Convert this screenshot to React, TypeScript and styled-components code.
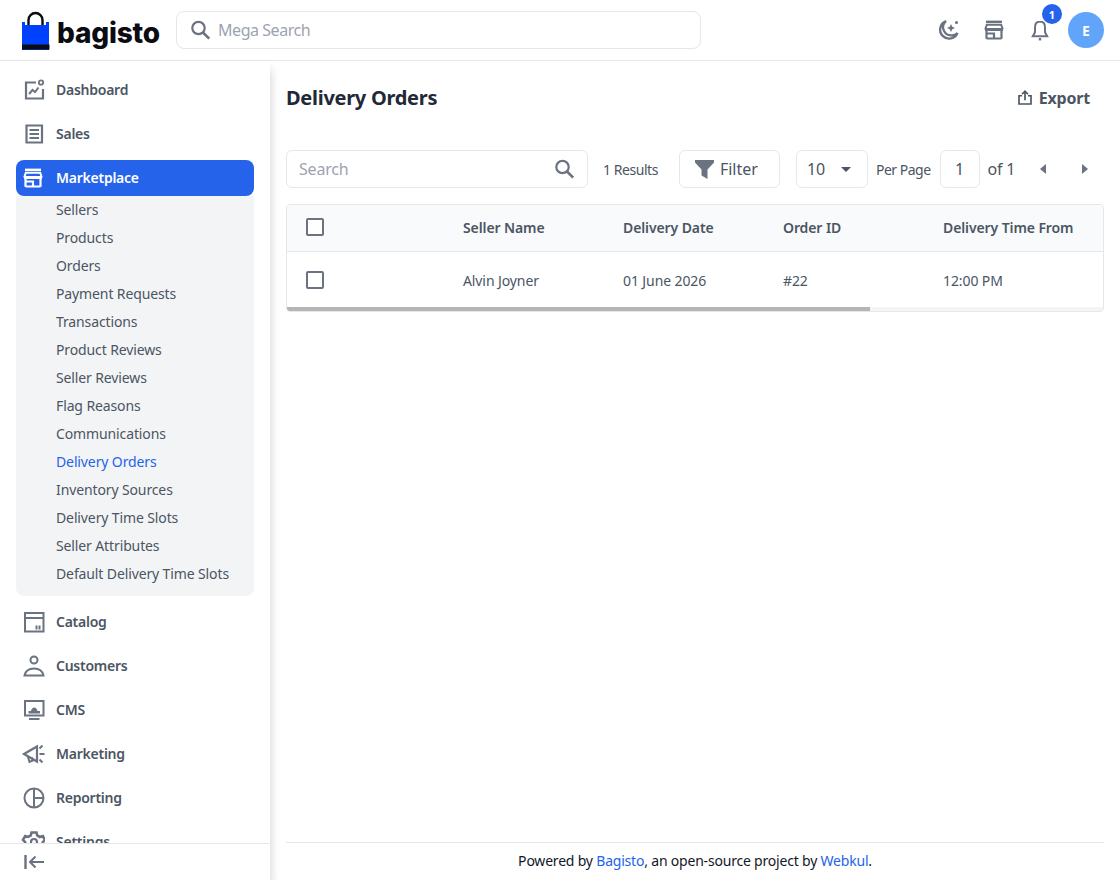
import React from 'react'
import styled, { createGlobalStyle } from 'styled-components'

const bodyFont = '"Noto Sans", "Open Sans", sans-serif'

const GlobalStyle = createGlobalStyle`
  html, body { margin: 0; padding: 0; background: #fff; height: 100%; overflow: hidden; }
  body { font-family: ${bodyFont}; color: #4b5563; }
  * { box-sizing: border-box; }
`

const Page = styled.div`
  width: 1120px;
  height: 880px;
  display: flex;
  flex-direction: column;
  overflow: hidden;
`

const Header = styled.header`
  height: 61px;
  flex: none;
  display: flex;
  align-items: center;
  justify-content: space-between;
  padding: 0 16px 0 21px;
  border-bottom: 1px solid #e5e7eb;
  background: #fff;
`

const HeaderLeft = styled.div`
  display: flex;
  align-items: center;
`

const Logo = styled.div`
  display: flex;
  align-items: flex-end;
  width: 155px;
  gap: 7px;
`

const LogoText = styled.span`
  font-family: Inter, sans-serif;
  font-size: 28px;
  line-height: 34px;
  font-weight: 800;
  letter-spacing: -0.2px;
  color: #0b0b12;
`

const MegaSearch = styled.div`
  width: 525px;
  height: 38px;
  display: flex;
  align-items: center;
  gap: 6px;
  padding: 0 11px;
  border: 1px solid #e5e7eb;
  border-radius: 8px;
  color: #9ca3af;
  font-size: 16px;
  letter-spacing: -0.45px;
  svg { color: #6b7280; }
`

const HeaderRight = styled.div`
  display: flex;
  align-items: center;
  gap: 22px;
  color: #6b7280;
`

const IconSlot = styled.div`
  position: relative;
  width: 24px;
  height: 24px;
  display: flex;
`

const Badge = styled.span`
  position: absolute;
  top: -14px;
  left: 14px;
  width: 20px;
  height: 20px;
  border-radius: 50%;
  background: #2563eb;
  color: #fff;
  font-size: 11px;
  font-weight: 700;
  display: flex;
  align-items: center;
  justify-content: center;
`

const Avatar = styled.div`
  width: 36px;
  height: 36px;
  margin-left: -6px;
  border-radius: 50%;
  background: #60a5fa;
  color: #fff;
  font-size: 14px;
  font-weight: 700;
  display: flex;
  align-items: center;
  justify-content: center;
`

const Body = styled.div`
  flex: 1;
  min-height: 0;
  display: flex;
`

const Sidebar = styled.aside`
  width: 270px;
  flex: none;
  display: flex;
  flex-direction: column;
  background: #fff;
  box-shadow: 0 8px 10px rgba(0, 0, 0, 0.2);
  position: relative;
  z-index: 1;
`

const Nav = styled.nav`
  flex: 1;
  min-height: 0;
  overflow: hidden;
  padding: 11px 16px 0;
`

const NavItem = styled.a<{ $active?: boolean }>`
  height: 36px;
  margin-bottom: 8px;
  display: flex;
  align-items: center;
  gap: 11px;
  padding: 0 5px;
  border-radius: 8px;
  font-size: 14px;
  font-weight: 600;
  letter-spacing: -0.25px;
  color: ${p => (p.$active ? '#fff' : '#4b5563')};
  background: ${p => (p.$active ? '#2563eb' : 'transparent')};
  svg { color: ${p => (p.$active ? '#fff' : '#6b7280')}; flex: none; }
`

const NavLabel = styled.span`
  padding-bottom: 2px;
`

const SubMenu = styled.div`
  margin: -8px 0 8px;
  padding: 0 0 8px 40px;
  background: #f3f4f6;
  border-radius: 0 0 8px 8px;
`

const SubItem = styled.a<{ $active?: boolean }>`
  display: flex;
  align-items: center;
  height: 28px;
  padding-bottom: 2px;
  font-size: 14px;
  letter-spacing: -0.12px;
  color: ${p => (p.$active ? '#2563eb' : '#4b5563')};
`

const Collapse = styled.div`
  height: 37px;
  flex: none;
  display: flex;
  align-items: center;
  padding-left: 22px;
  background: #fff;
  border-top: 1px solid #e5e7eb;
  color: #6b7280;
`

const Main = styled.main`
  flex: 1;
  min-width: 0;
  display: flex;
  flex-direction: column;
  padding: 0 16px;
`

const Content = styled.div`
  flex: 1;
  min-height: 0;
`

const TitleRow = styled.div`
  height: 74px;
  display: flex;
  justify-content: space-between;
  align-items: center;
`

const Title = styled.h1`
  margin: 0 0 2px;
  font-size: 20px;
  font-weight: 700;
  letter-spacing: -0.28px;
  color: #1f2937;
`

const ExportBtn = styled.button`
  display: flex;
  align-items: center;
  gap: 5px;
  padding: 0 14px 0 0;
  border: 0;
  background: none;
  font: 700 16px ${bodyFont};
  letter-spacing: -0.2px;
  color: #4b5563;
`

const Toolbar = styled.div`
  margin-top: 15px;
  height: 38px;
  display: flex;
  align-items: center;
`

const Field = styled.div`
  height: 38px;
  display: flex;
  align-items: center;
  border: 1px solid #e5e7eb;
  border-radius: 6px;
  background: #fff;
  font-size: 16px;
  color: #4b5563;
`

const SearchField = styled(Field)`
  width: 302px;
  justify-content: space-between;
  padding: 0 11px 0 12px;
  color: #9ca3af;
  letter-spacing: -0.2px;
  svg { color: #6b7280; }
`

const Results = styled.span`
  margin-left: 15px;
  font-size: 14px;
  letter-spacing: -0.45px;
`

const FilterBtn = styled(Field)`
  width: 101px;
  margin-left: 21px;
  padding-left: 15px;
  gap: 6px;
`

const PerPageSelect = styled(Field)`
  width: 72px;
  margin-left: 16px;
  padding: 0 16px 0 10px;
  justify-content: space-between;
`

const PerPageLabel = styled.span`
  margin-left: 8px;
  font-size: 14px;
  letter-spacing: -0.5px;
`

const PageBox = styled(Field)`
  width: 40px;
  margin-left: 9px;
  justify-content: center;
`

const OfLabel = styled.span`
  margin-left: 8px;
  font-size: 16px;
  letter-spacing: -0.2px;
`

const Pager = styled.div`
  margin-left: 25px;
  width: 48px;
  display: flex;
  justify-content: space-between;
  color: #6b7280;
`

const Table = styled.div`
  margin-top: 16px;
  border: 1px solid #e5e7eb;
  border-radius: 4px;
  overflow: hidden;
`

const Row = styled.div<{ $head?: boolean }>`
  display: grid;
  grid-template-columns: 176px 160px 160px 160px 1fr;
  align-items: center;
  height: ${p => (p.$head ? '47px' : '55px')};
  padding-bottom: ${p => (p.$head ? '2px' : '0')};
  font-size: 14px;
  font-weight: ${p => (p.$head ? 600 : 400)};
  letter-spacing: -0.1px;
  background: ${p => (p.$head ? '#f9fafb' : '#fff')};
  border-bottom: ${p => (p.$head ? '1px solid #e5e7eb' : '0')};
`

const BodyCell = styled.span`
  padding-top: 2px;
`

const CheckCell = styled.div`
  padding-left: 19px;
  display: flex;
`

const Check = styled.span`
  width: 18px;
  height: 18px;
  border: 2px solid #6b7280;
  border-radius: 2px;
  background: #fff;
`

const ScrollTrack = styled.div`
  height: 4px;
  background: #f3f4f6;
`

const ScrollThumb = styled.div`
  width: 583px;
  height: 4px;
  background: #b5b5b5;
`

const Footer = styled.footer`
  height: 38px;
  flex: none;
  display: flex;
  align-items: center;
  justify-content: center;
  padding-bottom: 2px;
  border-top: 1px solid #e5e7eb;
  font-size: 14px;
  letter-spacing: -0.2px;
  color: #111827;
`

const FooterLink = styled.a`
  color: #2563eb;
`

type IconProps = { size?: number }

const Svg = ({ size = 24, children }: IconProps & { children: React.ReactNode }) => (
  <svg width={size} height={size} viewBox="0 0 24 24" fill="none" stroke="currentColor" strokeWidth="2">
    {children}
  </svg>
)

const SearchIcon = ({ size = 24 }: IconProps) => (
  <Svg size={size}>
    <circle cx="10.5" cy="10" r="6.2" strokeWidth="2.2" />
    <path d="M15 14.5l6.200 6.200" strokeWidth="2.600" />
  </Svg>
)

const MoonIcon = () => (
  <Svg>
    <path d="M10 3.200a9 9 0 1 0 11.500 11.800c-1.400 1.500-3.400 2.300-5.600 2.300A8 8 0 0 1 10 3.200z" strokeWidth="2.300" />
    <path d="M15 6l1.300 2.700 2.700 1.300-2.700 1.300L15 14l-1.300-2.700L11 10l2.700-1.300z" fill="currentColor" stroke="none" />
    <circle cx="20.500" cy="4.500" r="1.500" fill="currentColor" stroke="none" />
  </Svg>
)

const StoreIcon = () => (
  <Svg>
    <path d="M4 3.800h16" strokeWidth="2.400" />
    <path d="M3.200 11.500L4.800 6.800h14.400l1.600 4.700" strokeWidth="2" />
    <path d="M3 11.500h18" strokeWidth="3" />
    <path d="M4.500 12v8.800M19.500 12v8.800M4.500 15.500h7.500v5H4.500M12 20.500h7.500" strokeWidth="2.200" />
  </Svg>
)

const BellIcon = () => (
  <Svg>
    <path d="M12 3.500c-3.300 0-5 2.500-5 5.700v5L4.800 18.300h14.400L17 14.200v-5c0-3.200-1.700-5.700-5-5.700z" strokeWidth="2" />
    <path d="M10.800 21.200h2.400" strokeWidth="2.400" />
  </Svg>
)

const ExportIcon = () => (
  <Svg size={18}>
    <path d="M8 9H4v11h16V9h-4" strokeWidth="2.200" />
    <path d="M12 15V3.500M8 7l4-4 4 4" strokeWidth="2.200" />
  </Svg>
)

const DashboardIcon = () => (
  <Svg>
    <path d="M15 4.500H5v16h17V11" strokeWidth="2.200" />
    <circle cx="20" cy="4.500" r="2.200" strokeWidth="1.800" />
    <path d="M8 16l3.500-4 2.500 2 3.500-4.500" strokeWidth="2" />
  </Svg>
)

const SalesIcon = () => (
  <Svg>
    <path d="M5.500 3.500h15.500v17H5.500z" strokeWidth="2.200" />
    <path d="M8.500 8h9.500M8.500 12h9.500M8.500 16h9.500" strokeWidth="2" />
  </Svg>
)

const CatalogIcon = () => (
  <Svg>
    <path d="M4 3h18.500v18.500H4zM4 8h18.500" strokeWidth="2" />
    <path d="M15.500 15.500v4M18.500 15.500v4" strokeWidth="2" />
  </Svg>
)

const CustomersIcon = () => (
  <Svg>
    <circle cx="13" cy="6" r="3.500" strokeWidth="2" />
    <path d="M3.500 21.500c1-4.500 4.500-7 9.500-7s8.500 2.500 9.500 7z" strokeWidth="2" />
  </Svg>
)

const CmsIcon = () => (
  <Svg>
    <path d="M4 3h18.500v14.500H4zM8 21h10.500" strokeWidth="2" />
    <path d="M7.500 15.500V13h2.500c.5-2 1.800-3.500 3.200-3.500S16 11 16.500 13H19v2.500z" fill="currentColor" stroke="none" />
  </Svg>
)

const MarketingIcon = () => (
  <Svg>
    <path d="M3 12l13-7.500v15z" strokeWidth="2.200" />
    <path d="M7 15l1.500 5 3.500-1.500-1-3" strokeWidth="2" />
    <path d="M18.500 6.500l3-3M18.500 12h5M18.500 17.500l3 3" strokeWidth="2" />
  </Svg>
)

const ReportingIcon = () => (
  <Svg>
    <circle cx="13" cy="12" r="9.500" strokeWidth="2" />
    <path d="M13 2.500v19M13 12h9.500" strokeWidth="2" />
  </Svg>
)

const SettingsIcon = () => (
  <Svg>
    <path d="M10.500 2.500h5l.7 3 2.600 1.500 3-.9 2.200 3.900-2.200 2.200v2.600l2.200 2.200-2.200 3.900-3-.9-2.600 1.500-.7 3h-5l-.7-3-2.600-1.500-3 .9-2.200-3.900 2.200-2.200v-2.600L2 9.900l2.200-3.900 3 .9 2.600-1.500z" strokeWidth="2.600" />
    <circle cx="13" cy="12" r="3" strokeWidth="2.200" />
  </Svg>
)

const CollapseIcon = () => (
  <Svg>
    <path d="M3.500 5v14" strokeWidth="2.400" />
    <path d="M22 12H8M13.500 6.500L8 12l5.500 5.500" strokeWidth="2" />
  </Svg>
)

const BagLogo = () => (
  <svg width="29" height="39" viewBox="0 0 29 39">
    <path d="M7.500 14V9a7 7 0 0 1 14 0v5" fill="none" stroke="#0b0b12" strokeWidth="2.400" />
    <path d="M1 11h3v3h21v-3h3v28H1z" fill="#0041ff" />
    <path d="M1 33.500h27.500V38.500H1z" fill="#0b0b12" />
  </svg>
)

const FunnelIcon = () => (
  <svg width="19" height="19" viewBox="0 0 19 19">
    <path d="M0 0h19v2.500l-6.500 7V19l-6-3.500v-6L0 2.500z" fill="#6b7280" />
  </svg>
)

const Caret = styled.span<{ $dir: 'down' | 'left' | 'right' }>`
  width: 0;
  height: 0;
  ${p =>
    p.$dir === 'down'
      ? 'border-left: 5px solid transparent; border-right: 5px solid transparent; border-top: 5px solid #4b5563;'
      : p.$dir === 'left'
        ? 'border-top: 5px solid transparent; border-bottom: 5px solid transparent; border-right: 6px solid #6b7280;'
        : 'border-top: 5px solid transparent; border-bottom: 5px solid transparent; border-left: 6px solid #6b7280;'}
`

const subItems = [
  'Sellers',
  'Products',
  'Orders',
  'Payment Requests',
  'Transactions',
  'Product Reviews',
  'Seller Reviews',
  'Flag Reasons',
  'Communications',
  'Delivery Orders',
  'Inventory Sources',
  'Delivery Time Slots',
  'Seller Attributes',
  'Default Delivery Time Slots',
]

const columns = ['Seller Name', 'Delivery Date', 'Order ID', 'Delivery Time From']
const rowData = ['Alvin Joyner', '01 June 2026', '#22', '12:00 PM']

export default function App() {
  return (
    <Page>
      <GlobalStyle />
      <Header>
        <HeaderLeft>
          <Logo>
            <BagLogo />
            <LogoText>bagisto</LogoText>
          </Logo>
          <MegaSearch>
            <SearchIcon />
            Mega Search
          </MegaSearch>
        </HeaderLeft>
        <HeaderRight>
          <IconSlot><MoonIcon /></IconSlot>
          <IconSlot><StoreIcon /></IconSlot>
          <IconSlot>
            <BellIcon />
            <Badge>1</Badge>
          </IconSlot>
          <Avatar>E</Avatar>
        </HeaderRight>
      </Header>
      <Body>
        <Sidebar>
          <Nav>
            <NavItem><DashboardIcon /><NavLabel>Dashboard</NavLabel></NavItem>
            <NavItem><SalesIcon /><NavLabel>Sales</NavLabel></NavItem>
            <NavItem $active><StoreIcon /><NavLabel>Marketplace</NavLabel></NavItem>
            <SubMenu>
              {subItems.map(item => (
                <SubItem key={item} $active={item === 'Delivery Orders'}>{item}</SubItem>
              ))}
            </SubMenu>
            <NavItem><CatalogIcon /><NavLabel>Catalog</NavLabel></NavItem>
            <NavItem><CustomersIcon /><NavLabel>Customers</NavLabel></NavItem>
            <NavItem><CmsIcon /><NavLabel>CMS</NavLabel></NavItem>
            <NavItem><MarketingIcon /><NavLabel>Marketing</NavLabel></NavItem>
            <NavItem><ReportingIcon /><NavLabel>Reporting</NavLabel></NavItem>
            <NavItem><SettingsIcon /><NavLabel>Settings</NavLabel></NavItem>
          </Nav>
          <Collapse><CollapseIcon /></Collapse>
        </Sidebar>
        <Main>
          <Content>
            <TitleRow>
              <Title>Delivery Orders</Title>
              <ExportBtn><ExportIcon />Export</ExportBtn>
            </TitleRow>
            <Toolbar>
              <SearchField>
                Search
                <SearchIcon />
              </SearchField>
              <Results>1 Results</Results>
              <FilterBtn><FunnelIcon />Filter</FilterBtn>
              <PerPageSelect>
                10
                <Caret $dir="down" />
              </PerPageSelect>
              <PerPageLabel>Per Page</PerPageLabel>
              <PageBox>1</PageBox>
              <OfLabel>of 1</OfLabel>
              <Pager>
                <Caret $dir="left" />
                <Caret $dir="right" />
              </Pager>
            </Toolbar>
            <Table>
              <Row $head>
                <CheckCell><Check /></CheckCell>
                {columns.map(c => <span key={c}>{c}</span>)}
              </Row>
              <Row>
                <CheckCell><Check /></CheckCell>
                {rowData.map(c => <BodyCell key={c}>{c}</BodyCell>)}
              </Row>
              <ScrollTrack><ScrollThumb /></ScrollTrack>
            </Table>
          </Content>
          <Footer>
            <span>
              Powered by <FooterLink>Bagisto</FooterLink>, an open-source project by <FooterLink>Webkul</FooterLink>.
            </span>
          </Footer>
        </Main>
      </Body>
    </Page>
  )
}
